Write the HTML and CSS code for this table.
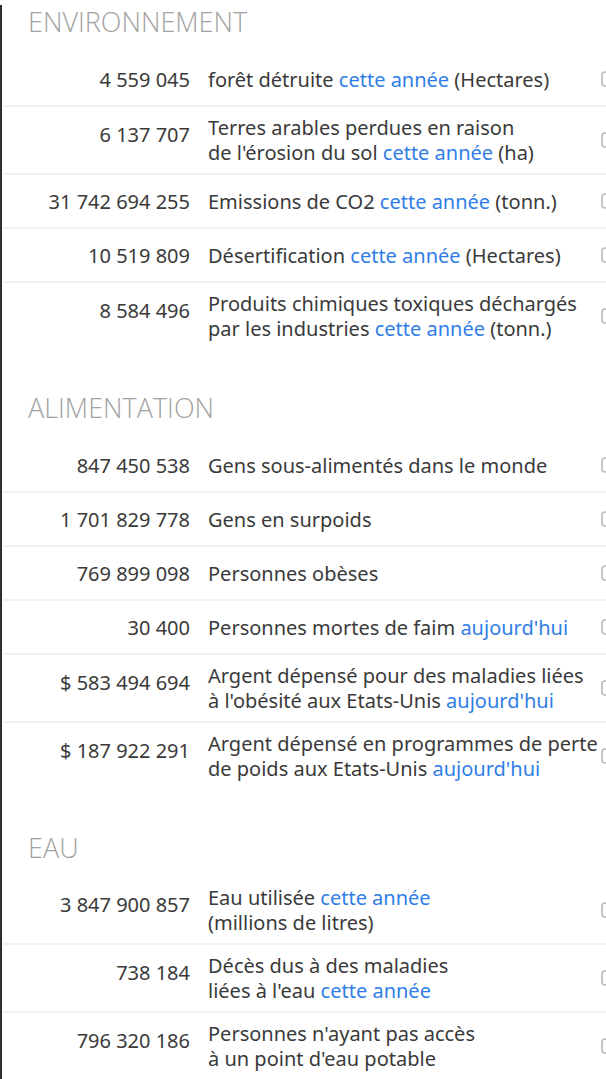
FILE: index.html
```html
<!DOCTYPE html>
<html lang="fr">
<head>
  <meta charset="UTF-8" />
  <title>Statistiques mondiales</title>
  <link rel="stylesheet" href="styles.css">
</head>
<body>
  <div class="page">

    <section class="section">
      <h2 class="section-title">ENVIRONNEMENT</h2>
      <div class="row">
        <span class="num">4 559 045</span>
        <span class="desc">forêt détruite <span class="hl">cette année</span> (Hectares)</span>
        <span class="ico"><svg width="16" height="16" viewBox="0 0 16 16"><rect x="1" y="1" width="14" height="14" rx="3" fill="none" stroke="#b9b9b9" stroke-width="1.6"/></svg></span>
      </div>
      <div class="row two">
        <span class="num">6 137 707</span>
        <span class="desc">Terres arables perdues en raison<br>de l'érosion du sol <span class="hl">cette année</span> (ha)</span>
        <span class="ico"><svg width="16" height="16" viewBox="0 0 16 16"><rect x="1" y="1" width="14" height="14" rx="3" fill="none" stroke="#b9b9b9" stroke-width="1.6"/></svg></span>
      </div>
      <div class="row">
        <span class="num">31 742 694 255</span>
        <span class="desc">Emissions de CO2 <span class="hl">cette année</span> (tonn.)</span>
        <span class="ico"><svg width="16" height="16" viewBox="0 0 16 16"><rect x="1" y="1" width="14" height="14" rx="3" fill="none" stroke="#b9b9b9" stroke-width="1.6"/></svg></span>
      </div>
      <div class="row">
        <span class="num">10 519 809</span>
        <span class="desc">Désertification <span class="hl">cette année</span> (Hectares)</span>
        <span class="ico"><svg width="16" height="16" viewBox="0 0 16 16"><rect x="1" y="1" width="14" height="14" rx="3" fill="none" stroke="#b9b9b9" stroke-width="1.6"/></svg></span>
      </div>
      <div class="row two">
        <span class="num">8 584 496</span>
        <span class="desc">Produits chimiques toxiques déchargés<br>par les industries <span class="hl">cette année</span> (tonn.)</span>
        <span class="ico"><svg width="16" height="16" viewBox="0 0 16 16"><rect x="1" y="1" width="14" height="14" rx="3" fill="none" stroke="#b9b9b9" stroke-width="1.6"/></svg></span>
      </div>
    </section>

    <section class="section">
      <h2 class="section-title">ALIMENTATION</h2>
      <div class="row">
        <span class="num">847 450 538</span>
        <span class="desc">Gens sous-alimentés dans le monde</span>
        <span class="ico"><svg width="16" height="16" viewBox="0 0 16 16"><rect x="1" y="1" width="14" height="14" rx="3" fill="none" stroke="#b9b9b9" stroke-width="1.6"/></svg></span>
      </div>
      <div class="row">
        <span class="num">1 701 829 778</span>
        <span class="desc">Gens en surpoids</span>
        <span class="ico"><svg width="16" height="16" viewBox="0 0 16 16"><rect x="1" y="1" width="14" height="14" rx="3" fill="none" stroke="#b9b9b9" stroke-width="1.6"/></svg></span>
      </div>
      <div class="row">
        <span class="num">769 899 098</span>
        <span class="desc">Personnes obèses</span>
        <span class="ico"><svg width="16" height="16" viewBox="0 0 16 16"><rect x="1" y="1" width="14" height="14" rx="3" fill="none" stroke="#b9b9b9" stroke-width="1.6"/></svg></span>
      </div>
      <div class="row">
        <span class="num">30 400</span>
        <span class="desc">Personnes mortes de faim <span class="hl">aujourd'hui</span></span>
        <span class="ico"><svg width="16" height="16" viewBox="0 0 16 16"><rect x="1" y="1" width="14" height="14" rx="3" fill="none" stroke="#b9b9b9" stroke-width="1.6"/></svg></span>
      </div>
      <div class="row two">
        <span class="num">$ 583 494 694</span>
        <span class="desc">Argent dépensé pour des maladies liées<br>à l'obésité aux Etats-Unis <span class="hl">aujourd'hui</span></span>
        <span class="ico"><svg width="16" height="16" viewBox="0 0 16 16"><rect x="1" y="1" width="14" height="14" rx="3" fill="none" stroke="#b9b9b9" stroke-width="1.6"/></svg></span>
      </div>
      <div class="row two">
        <span class="num">$ 187 922 291</span>
        <span class="desc">Argent dépensé en programmes de perte<br>de poids aux Etats-Unis <span class="hl">aujourd'hui</span></span>
        <span class="ico"><svg width="16" height="16" viewBox="0 0 16 16"><rect x="1" y="1" width="14" height="14" rx="3" fill="none" stroke="#b9b9b9" stroke-width="1.6"/></svg></span>
      </div>
    </section>

    <section class="section">
      <h2 class="section-title">EAU</h2>
      <div class="row two">
        <span class="num">3 847 900 857</span>
        <span class="desc">Eau utilisée <span class="hl">cette année</span><br>(millions de litres)</span>
        <span class="ico"><svg width="16" height="16" viewBox="0 0 16 16"><rect x="1" y="1" width="14" height="14" rx="3" fill="none" stroke="#b9b9b9" stroke-width="1.6"/></svg></span>
      </div>
      <div class="row two">
        <span class="num">738 184</span>
        <span class="desc">Décès dus à des maladies<br>liées à l'eau <span class="hl">cette année</span></span>
        <span class="ico"><svg width="16" height="16" viewBox="0 0 16 16"><rect x="1" y="1" width="14" height="14" rx="3" fill="none" stroke="#b9b9b9" stroke-width="1.6"/></svg></span>
      </div>
      <div class="row two">
        <span class="num">796 320 186</span>
        <span class="desc">Personnes n'ayant pas accès<br>à un point d'eau potable</span>
        <span class="ico"><svg width="16" height="16" viewBox="0 0 16 16"><rect x="1" y="1" width="14" height="14" rx="3" fill="none" stroke="#b9b9b9" stroke-width="1.6"/></svg></span>
      </div>
    </section>

  </div>
</body>
</html>
```

FILE: styles.css
```css
html, body {
  margin: 0;
  padding: 0;
  height: 100%;
  overflow: hidden;
  background: #fff;
  font-family: 'Noto Sans', 'Open Sans', sans-serif;
  color: #3a3a3a;
}

.page {
  border-left: 2px solid #2f2f2f;
  min-height: 100%;
  box-sizing: border-box;
}

.section + .section {
  margin-top: 40px;
}

.section-title {
  margin: 5px 0 14px 0;
  padding-left: 26px;
  font-family: 'Open Sans', 'Noto Sans', sans-serif;
  font-weight: 300;
  font-size: 27px;
  line-height: 34px;
  color: #a2a2a2;
}

.section + .section .section-title {
  margin-top: 6px;
}

.section:last-child .section-title {
  margin-bottom: 12px;
}

.row {
  display: flex;
  align-items: center;
  box-sizing: border-box;
  min-height: 54px;
  padding: 8px 0;
  margin-left: 1px;
  border-bottom: 2px solid #eef1f2;
  font-size: 20px;
  line-height: 25px;
  white-space: nowrap;
}

.section .row:last-child {
  border-bottom-color: transparent;
}

.num {
  flex: none;
  width: 187px;
  text-align: right;
  margin-right: 18px;
}

.row.two .num {
  align-self: flex-start;
  margin-top: 7px;
}

.desc {
  flex: 1 1 0;
  min-width: 0;
}

.hl {
  color: #2f7ee6;
}

.ico {
  flex: none;
  width: 16px;
  height: 16px;
  margin-right: -11px;
  display: flex;
}
```
